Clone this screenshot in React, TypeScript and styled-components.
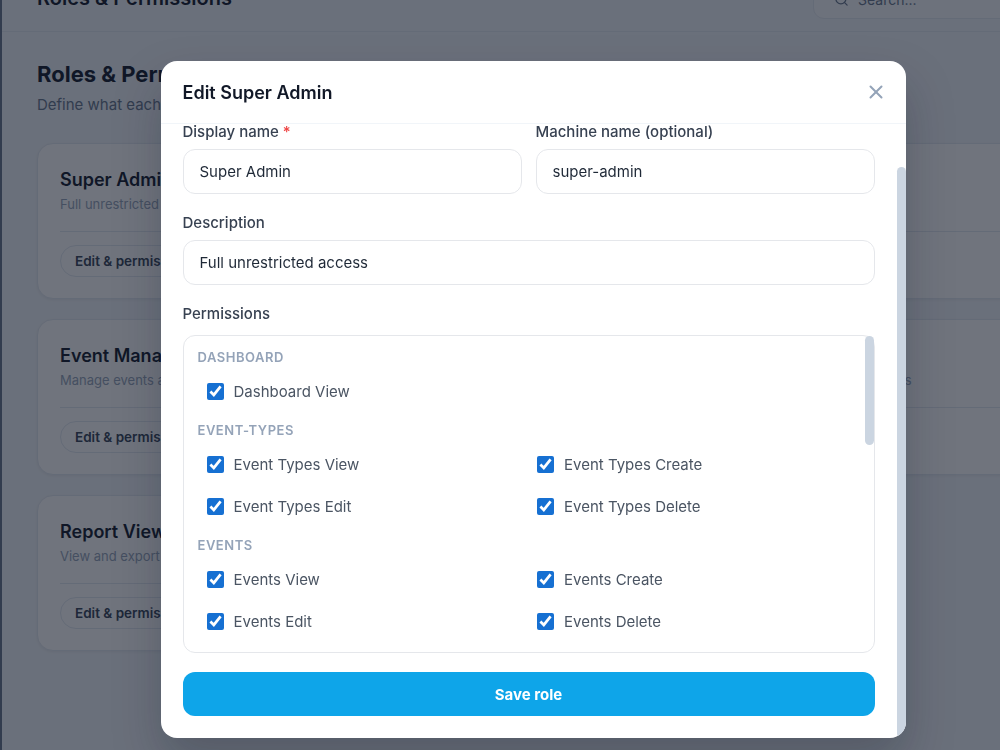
import React, { useLayoutEffect, useRef } from "react";
import styled, { createGlobalStyle } from "styled-components";
import { Search, X } from "lucide-react";

const GlobalStyle = createGlobalStyle`
    * { box-sizing: border-box; }
    body {
        margin: 0;
        overflow: hidden;
        font-family: Inter, "Noto Sans", "Liberation Sans", sans-serif;
        background: #f1f5f9;
        color: #0f172a;
    }
`;

const Shell = styled.div`
    width: 1066px;
    height: 100vh;
    border-left: 2px solid #64748b;
    background: #f1f5f9;
`;

const Main = styled.main`
    height: 100vh;
    overflow-y: auto;
    &::-webkit-scrollbar {
        display: none;
    }
`;

const TopBar = styled.header`
    height: 67px;
    padding: 0 35px;
    display: flex;
    align-items: center;
    justify-content: space-between;
    border-bottom: 1px solid #e2e8f0;
`;

const TopTitle = styled.div`
    font-size: 20px;
    font-weight: 600;
    color: #0f172a;
`;

const SearchBox = styled.div`
    width: 218px;
    height: 38px;
    margin-top: 3px;
    padding: 0 14px 0 20px;
    display: flex;
    align-items: center;
    gap: 9px;
    border: 1px solid #e2e8f0;
    border-radius: 11px;
    background: #f8fafc;
    color: #64748b;
    font-size: 14px;
`;

const Content = styled.div`
    padding: 27px 35px 120px;
`;

const PageTitle = styled.h1`
    margin: 0;
    font-size: 22px;
    line-height: 30px;
    font-weight: 700;
    color: #0f172a;
`;

const PageSub = styled.p`
    margin: 5px 0 0;
    font-size: 15px;
    line-height: 22px;
    color: #64748b;
`;

const CardGrid = styled.div`
    margin-top: 27px;
    display: grid;
    grid-template-columns: 1fr 1fr;
    gap: 20px;
`;

const Card = styled.div`
    height: 156px;
    padding: 24px 22px 22px;
    background: #fff;
    border: 1px solid #e2e8f0;
    border-radius: 16px;
    box-shadow: 0 1px 3px rgba(15, 23, 42, 0.06);
`;

const CardTitle = styled.div`
    font-size: 18px;
    line-height: 24px;
    font-weight: 600;
    color: #0f172a;
`;

const CardDesc = styled.div`
    margin-top: 3px;
    font-size: 13px;
    line-height: 18px;
    color: #94a3b8;
`;

const CardDivider = styled.div`
    margin-top: 18px;
    border-top: 1px solid #e2e8f0;
`;

const PillButton = styled.button`
    margin-top: 13px;
    height: 32px;
    padding: 0 14px;
    border: 1px solid #e2e8f0;
    border-radius: 16px;
    background: #fff;
    font-family: inherit;
    font-size: 13.5px;
    font-weight: 600;
    color: #334155;
`;

const Overlay = styled.div`
    position: fixed;
    top: 0;
    left: 0;
    width: 1066px;
    height: 100vh;
    padding-top: 61px;
    display: flex;
    justify-content: center;
    align-items: flex-start;
    background: rgba(17, 24, 39, 0.6);
`;

const Modal = styled.div`
    position: relative;
    width: 745px;
    height: 677px;
    display: flex;
    flex-direction: column;
    background: #fff;
    border-radius: 16px;
    overflow: hidden;
    box-shadow: 0 24px 48px rgba(15, 23, 42, 0.25);
`;

const ModalHeader = styled.div`
    flex: none;
    height: 63px;
    padding: 0 16px 0 22px;
    display: flex;
    align-items: center;
    justify-content: space-between;
    border-bottom: 1px solid #f1f5f9;
`;

const ModalTitle = styled.h2`
    margin: 0;
    font-size: 18px;
    font-weight: 600;
    color: #111827;
`;

const CloseButton = styled.button`
    width: 28px;
    height: 28px;
    padding: 0;
    border: 0;
    background: none;
    display: flex;
    align-items: center;
    justify-content: center;
    color: #94a3b8;
`;

/* the browser hides real scrollbars, so the thumbs are drawn on top */
const Thumb = styled.div<{ $top: number; $right: number; $height: number }>`
    position: absolute;
    top: ${(p) => p.$top}px;
    right: ${(p) => p.$right}px;
    width: 9px;
    height: ${(p) => p.$height}px;
    border-radius: 9px;
    background: #cbd5e1;
    pointer-events: none;
`;

const ModalBody = styled.div`
    flex: 1;
    min-height: 0;
    overflow-y: auto;
    padding: 42px 31px 22px 22px;
    display: flex;
    flex-direction: column;
    gap: 19px;
    &::-webkit-scrollbar {
        display: none;
    }
`;

const FieldRow = styled.div`
    display: grid;
    grid-template-columns: 1fr 1fr;
    gap: 14px;
`;

const Field = styled.div<{ $gap?: number }>`
    display: flex;
    flex-direction: column;
    gap: ${(p) => p.$gap ?? 7}px;
`;

const Label = styled.label`
    font-size: 15px;
    line-height: 20px;
    font-weight: 500;
    color: #374151;
`;

const Required = styled.span`
    color: #ef4444;
`;

const TextInput = styled.input`
    height: 45px;
    width: 100%;
    padding: 0 16px;
    border: 1px solid #e5e7eb;
    border-radius: 12px;
    font-family: inherit;
    font-size: 15px;
    color: #1f2937;
    outline: none;
`;

const PermFrame = styled.div`
    position: relative;
`;

const PermBox = styled.div`
    height: 318px;
    overflow-y: auto;
    padding: 13px 23px 13px 14px;
    border: 1px solid #e5e7eb;
    border-radius: 12px;
    display: flex;
    flex-direction: column;
    gap: 14px;
    &::-webkit-scrollbar {
        display: none;
    }
`;

const Group = styled.div`
    display: flex;
    flex-direction: column;
    gap: 9px;
`;

const GroupTitle = styled.div`
    font-size: 13px;
    line-height: 16px;
    font-weight: 600;
    letter-spacing: 0.04em;
    text-transform: uppercase;
    color: #94a3b8;
`;

const PermGrid = styled.div`
    display: grid;
    grid-template-columns: 1fr 1fr;
    gap: 8px;
`;

const PermItem = styled.label`
    height: 34px;
    padding: 0 9px;
    display: flex;
    align-items: center;
    gap: 10px;
    border-radius: 8px;
    font-size: 15px;
    color: #4b5563;
`;

const Check = styled.input`
    width: 17px;
    height: 17px;
    margin: 0;
    accent-color: #1670d2;
`;

const SaveButton = styled.button`
    flex: none;
    height: 44px;
    border: 0;
    border-radius: 12px;
    background: #0ea5e9;
    font-family: inherit;
    font-size: 15px;
    font-weight: 700;
    color: #fff;
`;

const roles = [
    { name: "Super Admin", desc: "Full unrestricted access" },
    { name: "Organizer", desc: "Create and manage own events" },
    { name: "Event Manager", desc: "Manage events and event types" },
    { name: "Check-in Staff", desc: "View attendees, manage check-ins & event registrations" },
    { name: "Report Viewer", desc: "View and export reports" },
];

const crud = (label: string) => [`${label} View`, `${label} Create`, `${label} Edit`, `${label} Delete`];

const groups = [
    { key: "dashboard", items: ["Dashboard View"] },
    { key: "event-types", items: crud("Event Types") },
    { key: "events", items: crud("Events") },
    { key: "attendees", items: crud("Attendees") },
    { key: "tickets", items: crud("Tickets") },
    { key: "users", items: crud("Users") },
    { key: "roles", items: crud("Roles") },
    { key: "reports", items: ["Reports View", "Reports Export"] },
    { key: "settings", items: ["Settings View", "Settings Edit"] },
];

const App = () => {
    const mainRef = useRef<HTMLElement>(null);
    const bodyRef = useRef<HTMLDivElement>(null);

    useLayoutEffect(() => {
        if (mainRef.current) mainRef.current.scrollTop = 35;
        if (bodyRef.current) bodyRef.current.scrollTop = bodyRef.current.scrollHeight;
    }, []);

    return (
        <>
            <GlobalStyle />
            <Shell>
                <Main ref={mainRef}>
                    <TopBar>
                        <TopTitle>Roles &amp; Permissions</TopTitle>
                        <SearchBox>
                            <Search size={15} />
                            Search...
                        </SearchBox>
                    </TopBar>
                    <Content>
                        <PageTitle>Roles &amp; Permissions</PageTitle>
                        <PageSub>Define what each role can do across the platform.</PageSub>
                        <CardGrid>
                            {roles.map((role) => (
                                <Card key={role.name}>
                                    <CardTitle>{role.name}</CardTitle>
                                    <CardDesc>{role.desc}</CardDesc>
                                    <CardDivider />
                                    <PillButton>Edit &amp; permissions</PillButton>
                                </Card>
                            ))}
                        </CardGrid>
                    </Content>
                </Main>
            </Shell>

            <Overlay>
                <Modal>
                    <ModalHeader>
                        <ModalTitle>Edit Super Admin</ModalTitle>
                        <CloseButton aria-label="Close">
                            <X size={22} strokeWidth={2.2} />
                        </CloseButton>
                    </ModalHeader>
                    <ModalBody ref={bodyRef}>
                        <FieldRow>
                            <Field>
                                <Label>
                                    Display name <Required>*</Required>
                                </Label>
                                <TextInput defaultValue="Super Admin" />
                            </Field>
                            <Field>
                                <Label>Machine name (optional)</Label>
                                <TextInput defaultValue="super-admin" />
                            </Field>
                        </FieldRow>
                        <Field>
                            <Label>Description</Label>
                            <TextInput defaultValue="Full unrestricted access" />
                        </Field>
                        <Field $gap={11}>
                            <Label>Permissions</Label>
                            <PermFrame>
                                <PermBox>
                                    {groups.map((group) => (
                                        <Group key={group.key}>
                                            <GroupTitle>{group.key}</GroupTitle>
                                            <PermGrid>
                                                {group.items.map((item) => (
                                                    <PermItem key={item}>
                                                        <Check type="checkbox" defaultChecked />
                                                        {item}
                                                    </PermItem>
                                                ))}
                                            </PermGrid>
                                        </Group>
                                    ))}
                                </PermBox>
                                <Thumb $top={1} $right={1} $height={109} />
                            </PermFrame>
                        </Field>
                        <SaveButton>Save role</SaveButton>
                    </ModalBody>
                    <Thumb $top={106} $right={0} $height={571} />
                </Modal>
            </Overlay>
        </>
    );
};

export default App;
